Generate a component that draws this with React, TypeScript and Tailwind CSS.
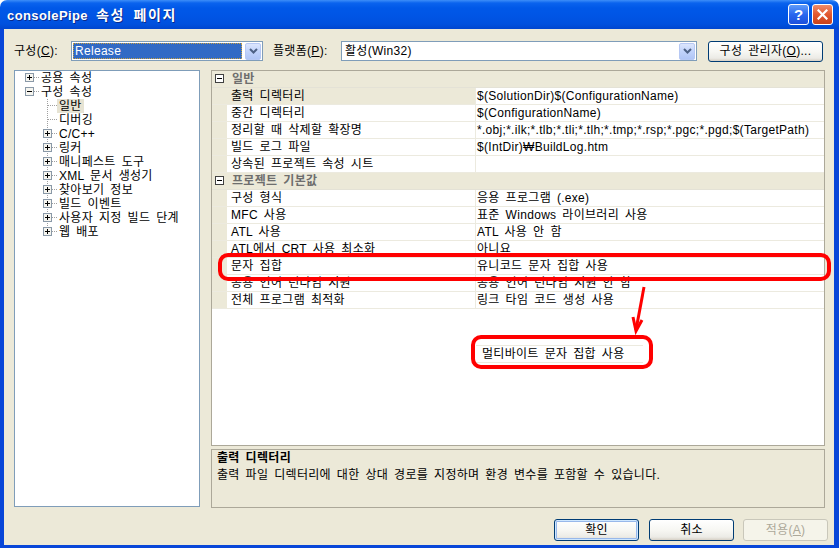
import React from "react";

const FONT = "font-[family-name:'Liberation_Sans','Noto_Sans_CJK_KR',sans-serif]";

function Expander({ open }: { open: boolean }) {
  return (
    <g>
      <rect x="0.5" y="2.5" width="8" height="8" fill="#f6f5ef" stroke="#8a99a8" />
      <line x1="2" y1="6.5" x2="7" y2="6.5" stroke="#000" />
      {!open && <line x1="4.5" y1="4" x2="4.5" y2="9" stroke="#000" />}
    </g>
  );
}

function RootRow({ label, open }: { label: string; open: boolean }) {
  return (
    <div className="h-[14px] flex items-center leading-[14px]">
      <svg width="16" height="14" className="ml-[10px] shrink-0">
        <line x1="9" y1="6.5" x2="15" y2="6.5" stroke="#a0a0a0" strokeDasharray="1 1" />
        <Expander open={open} />
      </svg>
      <span className="whitespace-nowrap">{label}</span>
    </div>
  );
}

function ChildRow({ label, exp, last, selected }: { label: string; exp: boolean; last?: boolean; selected?: boolean }) {
  return (
    <div className="h-[14px] flex items-center leading-[14px]">
      <svg width="14" height="14" className="ml-[28px] shrink-0">
        <line x1="4.5" y1="0" x2="4.5" y2={last ? 7 : 14} stroke="#a0a0a0" strokeDasharray="1 1" />
        <line x1="5" y1="6.5" x2="14" y2="6.5" stroke="#a0a0a0" strokeDasharray="1 1" />
        {exp && <Expander open={false} />}
      </svg>
      <span className={`whitespace-nowrap px-[2px] ${selected ? "bg-[#e6e3d3]" : ""}`}>{label}</span>
    </div>
  );
}

function Category({ label }: { label: string }) {
  return (
    <div className="h-[17px] flex items-center bg-[#ece9d8] border-b border-[#e4e2d6] shrink-0">
      <div className="w-[15px] h-full flex items-center">
        <svg width="10" height="10" className="ml-[3px]">
          <rect x="0.5" y="0.5" width="8" height="8" fill="#fff" stroke="#404040" />
          <line x1="2" y1="4.5" x2="7" y2="4.5" stroke="#000" />
        </svg>
      </div>
      <span className="ml-[5px] font-bold text-[#6e6e6e] leading-[16px]">{label}</span>
    </div>
  );
}

function Prop({ name, value, selected }: { name: string; value: string; selected?: boolean }) {
  return (
    <div className="h-[17px] flex border-b border-[#eceadf] shrink-0 leading-[16px]">
      <div className="w-[15px] bg-[#ece9d8]" />
      <div className={`w-[249px] pl-[4px] border-r border-[#eceadf] flex items-center whitespace-nowrap overflow-hidden ${selected ? "bg-[#ece9d8]" : "bg-white"}`}>
        {name}
      </div>
      <div className="flex-1 pl-[1px] flex items-center overflow-hidden whitespace-nowrap">{value}</div>
    </div>
  );
}

function XPButton({ children, def, disabled, className = "" }: { children: React.ReactNode; def?: boolean; disabled?: boolean; className?: string }) {
  const base = "w-[85px] h-[22px] rounded-[3px] border flex items-center justify-center leading-[16px] shrink-0";
  const look = disabled
    ? "border-[#c9c7ba] bg-[#f5f4ea] text-[#aca899]"
    : "border-[#003c74] bg-[linear-gradient(to_bottom,#ffffff_0%,#f7f7f3_50%,#ecebe6_85%,#d6d0c5_100%)] text-black";
  const ring = def ? "shadow-[inset_0_0_0_1px_#cee7ff,inset_0_0_0_2px_#98b8ea]" : "";
  return <div className={`${base} ${look} ${ring} ${className}`}>{children}</div>;
}

function ComboArrow() {
  return (
    <div className="w-[16px] h-[17px] rounded-[2px] border border-[#b6c8f4] bg-[linear-gradient(to_bottom,#dce6fd,#c1d3fb_50%,#b0c5f6)] flex items-center justify-center shrink-0">
      <svg width="9" height="6">
        <path d="M1 1 L4.5 4.5 L8 1" fill="none" stroke="#4d6185" strokeWidth="2" />
      </svg>
    </div>
  );
}

export default function App() {
  const children = [
    "C/C++",
    "링커",
    "매니페스트 도구",
    "XML 문서 생성기",
    "찾아보기 정보",
    "빌드 이벤트",
    "사용자 지정 빌드 단계",
    "웹 배포",
  ];
  return (
    <div className={`relative w-[839px] h-[548px] flex flex-col overflow-hidden bg-white text-[12px] text-black tracking-[0.3px] [word-spacing:2.3px] ${FONT}`}>
      {/* Title bar */}
      <div className="h-[29px] shrink-0 rounded-t-[7px] flex items-center pl-[7px] pr-[6px] bg-[linear-gradient(to_bottom,#3d8ef8_0px,#0a63ee_3px,#0058e8_8px,#0055e5_16px,#0051de_24px,#0046cf_29px)]">
        <span className="text-white font-bold text-[13px] [text-shadow:1px_1px_0_#0b2a8a] whitespace-nowrap pt-[1px] tracking-[0.4px] [word-spacing:0px]">
          consolePipe<span className="ml-[8px] text-[14px] tracking-[1.6px] [word-spacing:3px]">속성 페이지</span>
        </span>
        <div className="ml-auto flex gap-[3px]">
          <div className="w-[21px] h-[21px] rounded-[3px] border border-white bg-[linear-gradient(to_bottom,#5f9cf9,#2a67ef_50%,#1c50dc)] flex items-center justify-center text-white font-bold text-[15px] leading-none tracking-normal">?</div>
          <div className="w-[21px] h-[21px] rounded-[3px] border border-white bg-[linear-gradient(to_bottom,#ee8c6a,#e2582f_50%,#c9421c)] flex items-center justify-center">
            <svg width="11" height="11">
              <path d="M1.5 1.5 L9.5 9.5 M9.5 1.5 L1.5 9.5" stroke="#fff" strokeWidth="2.2" strokeLinecap="square" />
            </svg>
          </div>
        </div>
      </div>

      {/* Body */}
      <div className="flex-1 flex flex-col bg-[#ece9d8] border-l-[4px] border-r-[5px] border-b-[3px] border-[#0846d8]">
        {/* Toolbar */}
        <div className="flex items-center pl-[10px] pt-[12px] h-[32px] shrink-0">
          <span className="w-[57px] whitespace-nowrap">
            구성(<span className="underline">C</span>):
          </span>
          <div className="w-[192px] h-[20px] border border-[#7f9db9] bg-white flex items-center pl-[1px] pr-[1px] gap-[3px] shrink-0">
            <div className="flex-1 h-[16px] bg-[#316ac5] outline-1 outline-dotted outline-[#c8a040] -outline-offset-1 text-white pl-[2px] leading-[16px]">Release</div>
            <ComboArrow />
          </div>
          <span className="ml-[10px] w-[68px] whitespace-nowrap">
            플랫폼(<span className="underline">P</span>):
          </span>
          <div className="w-[356px] h-[20px] border border-[#7f9db9] bg-white flex items-center pl-[3px] pr-[1px] shrink-0">
            <div className="flex-1 leading-[16px]">활성(Win32)</div>
            <ComboArrow />
          </div>
          <XPButton className="ml-[11px] !w-[115px] !h-[21px]">
            구성 관리자(<span className="underline">O</span>)...
          </XPButton>
        </div>

        {/* Main */}
        <div className="flex pl-[10px] mt-[9px] shrink-0">
          {/* Tree */}
          <div className="w-[186px] h-[437px] border border-[#7f9db9] bg-white flex flex-col">
            <RootRow label="공용 속성" open={false} />
            <RootRow label="구성 속성" open={true} />
            <ChildRow label="일반" exp={false} selected />
            <ChildRow label="디버깅" exp={false} />
            {children.map((c, i) => (
              <ChildRow key={c} label={c} exp last={i === children.length - 1} />
            ))}
          </div>

          {/* Right column */}
          <div className="ml-[11px] w-[614px] flex flex-col">
            <div className="h-[376px] border border-[#aca899] bg-white flex flex-col overflow-hidden">
              <Category label="일반" />
              <Prop name="출력 디렉터리" value="$(SolutionDir)$(ConfigurationName)" selected />
              <Prop name="중간 디렉터리" value="$(ConfigurationName)" />
              <Prop name="정리할 때 삭제할 확장명" value="*.obj;*.ilk;*.tlb;*.tli;*.tlh;*.tmp;*.rsp;*.pgc;*.pgd;$(TargetPath)" />
              <Prop name="빌드 로그 파일" value="$(IntDir)₩BuildLog.htm" />
              <Prop name="상속된 프로젝트 속성 시트" value="" />
              <Category label="프로젝트 기본값" />
              <Prop name="구성 형식" value="응용 프로그램 (.exe)" />
              <Prop name="MFC 사용" value="표준 Windows 라이브러리 사용" />
              <Prop name="ATL 사용" value="ATL 사용 안 함" />
              <Prop name="ATL에서 CRT 사용 최소화" value="아니요" />
              <Prop name="문자 집합" value="유니코드 문자 집합 사용" />
              <Prop name="공용 언어 런타임 지원" value="공용 언어 런타임 지원 안 함" />
              <Prop name="전체 프로그램 최적화" value="링크 타임 코드 생성 사용" />
            </div>
            <div className="mt-[3px] h-[59px] border border-[#aca899] pl-[5px] pt-[1px]">
              <div className="font-bold leading-[15px]">출력 디렉터리</div>
              <div className="leading-[18px] whitespace-nowrap">출력 파일 디렉터리에 대한 상대 경로를 지정하며 환경 변수를 포함할 수 있습니다.</div>
            </div>
          </div>
        </div>

        {/* Buttons */}
        <div className="flex justify-end pr-[6px] mt-[11px]">
          <XPButton def>확인</XPButton>
          <XPButton className="ml-[10px]">취소</XPButton>
          <XPButton disabled className="ml-[9px]">
            적용(<span className="underline">A</span>)
          </XPButton>
        </div>
      </div>

      {/* Annotation overlay */}
      <div className="absolute left-[476px] top-[345px] w-[167px] h-[18px] border-y border-[#eceadf] bg-white pl-[6px] leading-[16px] whitespace-nowrap">
        멀티바이트 문자 집합 사용
      </div>
      <svg className="absolute left-0 top-0 pointer-events-none" width="839" height="548">
        <rect x="220" y="255" width="609" height="24" rx="8" fill="none" stroke="#ff0000" strokeWidth="4" />
        <rect x="473" y="337" width="178" height="30" rx="8" fill="none" stroke="#ff0000" strokeWidth="4" />
        <path d="M644 287 L636 330" stroke="#ff0000" strokeWidth="3" fill="none" />
        <path d="M633 317 L636 331 L642 320" stroke="#ff0000" strokeWidth="3" fill="none" />
      </svg>
    </div>
  );
}
